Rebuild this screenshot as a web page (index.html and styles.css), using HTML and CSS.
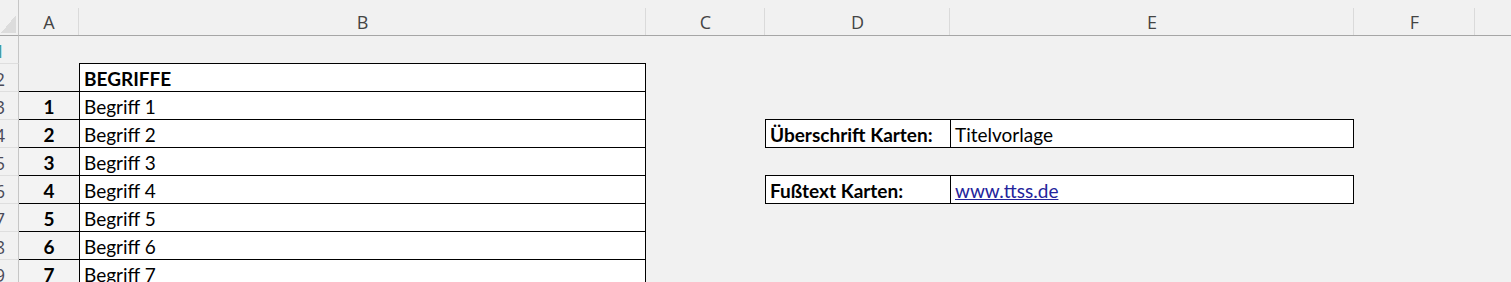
FILE: index.html
```html
<!DOCTYPE html>
<html lang="de">
<head>
  <meta charset="UTF-8" />
  <title>Begriffe</title>
  <link rel="stylesheet" href="styles.css">
</head>
<body>

  <div class="sheet">

    <!-- column headers -->
    <div class="corner"></div>
    <div class="col-head">A</div>
    <div class="col-head">B</div>
    <div class="col-head">C</div>
    <div class="col-head">D</div>
    <div class="col-head">E</div>
    <div class="col-head">F</div>
    <div class="col-head last"></div>

    <!-- row 1 -->
    <div class="row-head first">1</div>
    <div class="cell"></div><div class="cell"></div><div class="cell"></div>
    <div class="cell"></div><div class="cell"></div><div class="cell"></div><div class="cell"></div>

    <!-- row 2 -->
    <div class="row-head">2</div>
    <div class="cell"></div>
    <div class="cell box wide bold">BEGRIFFE</div>
    <div class="cell"></div><div class="cell"></div><div class="cell"></div><div class="cell"></div><div class="cell"></div>

    <!-- row 3 -->
    <div class="row-head">3</div>
    <div class="cell num">1</div>
    <div class="cell box wide">Begriff 1</div>
    <div class="cell"></div><div class="cell"></div><div class="cell"></div><div class="cell"></div><div class="cell"></div>

    <!-- row 4 -->
    <div class="row-head">4</div>
    <div class="cell num">2</div>
    <div class="cell box wide">Begriff 2</div>
    <div class="cell"></div>
    <div class="cell box bold">Überschrift Karten:</div>
    <div class="cell box wide">Titelvorlage</div>
    <div class="cell"></div><div class="cell"></div>

    <!-- row 5 -->
    <div class="row-head">5</div>
    <div class="cell num">3</div>
    <div class="cell box wide">Begriff 3</div>
    <div class="cell"></div>
    <div class="cell closing"></div>
    <div class="cell closing"></div>
    <div class="cell"></div><div class="cell"></div>

    <!-- row 6 -->
    <div class="row-head">6</div>
    <div class="cell num">4</div>
    <div class="cell box wide">Begriff 4</div>
    <div class="cell"></div>
    <div class="cell box bold">Fußtext Karten:</div>
    <div class="cell box wide"><a href="#">www.ttss.de</a></div>
    <div class="cell"></div><div class="cell"></div>

    <!-- row 7 -->
    <div class="row-head">7</div>
    <div class="cell num">5</div>
    <div class="cell box wide">Begriff 5</div>
    <div class="cell"></div>
    <div class="cell closing"></div>
    <div class="cell closing"></div>
    <div class="cell"></div><div class="cell"></div>

    <!-- row 8 -->
    <div class="row-head">8</div>
    <div class="cell num">6</div>
    <div class="cell box wide">Begriff 6</div>
    <div class="cell"></div><div class="cell"></div><div class="cell"></div><div class="cell"></div><div class="cell"></div>

    <!-- row 9 -->
    <div class="row-head">9</div>
    <div class="cell num">7</div>
    <div class="cell box wide">Begriff 7</div>
    <div class="cell"></div><div class="cell"></div><div class="cell"></div><div class="cell"></div><div class="cell"></div>

  </div>

</body>
</html>
```

FILE: styles.css
```css
* {
  margin: 0;
  padding: 0;
  box-sizing: border-box;
}

body {
  background-color: #f1f1f1;
  font-family: 'Lato', 'Liberation Sans', sans-serif;
  font-size: 19px;
  color: #000;
  overflow: hidden;
}

.sheet {
  display: grid;
  grid-template-columns: 19px 60px 567px 119px 185px 404px 121px 1fr;
  grid-template-rows: 36px 27px repeat(8, 28px);
}

/* headers */

.corner {
  border-right: 1px solid #c6c6c6;
  border-bottom: 1px solid #a6a6a6;
  background: linear-gradient(to bottom right, transparent 50%, #dcdcdc 50%) 1px 15px / 15px 18px no-repeat;
}

.col-head {
  display: flex;
  justify-content: center;
  align-items: flex-end;
  padding-bottom: 1px;
  font-family: 'Open Sans', 'Noto Sans', sans-serif;
  font-size: 18px;
  color: #444;
  border-bottom: 1px solid #a6a6a6;
  background: linear-gradient(#dadada, #dadada) right 8px / 1px 27px no-repeat;
}

.col-head.last {
  background: none;
}

.row-head {
  display: flex;
  justify-content: flex-end;
  align-items: flex-end;
  overflow: hidden;
  padding-right: 13px;
  padding-bottom: 0;
  font-family: 'Open Sans', 'Noto Sans', sans-serif;
  font-size: 18px;
  color: #4a4a58;
  border-right: 1px solid #c6c6c6;
  border-top: 1px solid #dedede;
}

.row-head.first {
  border-top: none;
  color: #3a9a9a;
}

/* cells */

.cell {
  display: flex;
  align-items: flex-end;
  padding: 0 4px 1px;
  white-space: nowrap;
  overflow: hidden;
}

.box {
  background-color: #fff;
  border-top: 1px solid #000;
  border-left: 1px solid #000;
}

.box.wide {
  border-right: 1px solid #000;
}

.num {
  justify-content: center;
  font-weight: bold;
  background-color: #f3f3f3;
  border-top: 1px solid #000;
}

.closing {
  border-top: 1px solid #000;
}

.bold {
  font-weight: bold;
}

.cell a {
  color: #24249c;
  text-decoration: underline;
}
```
